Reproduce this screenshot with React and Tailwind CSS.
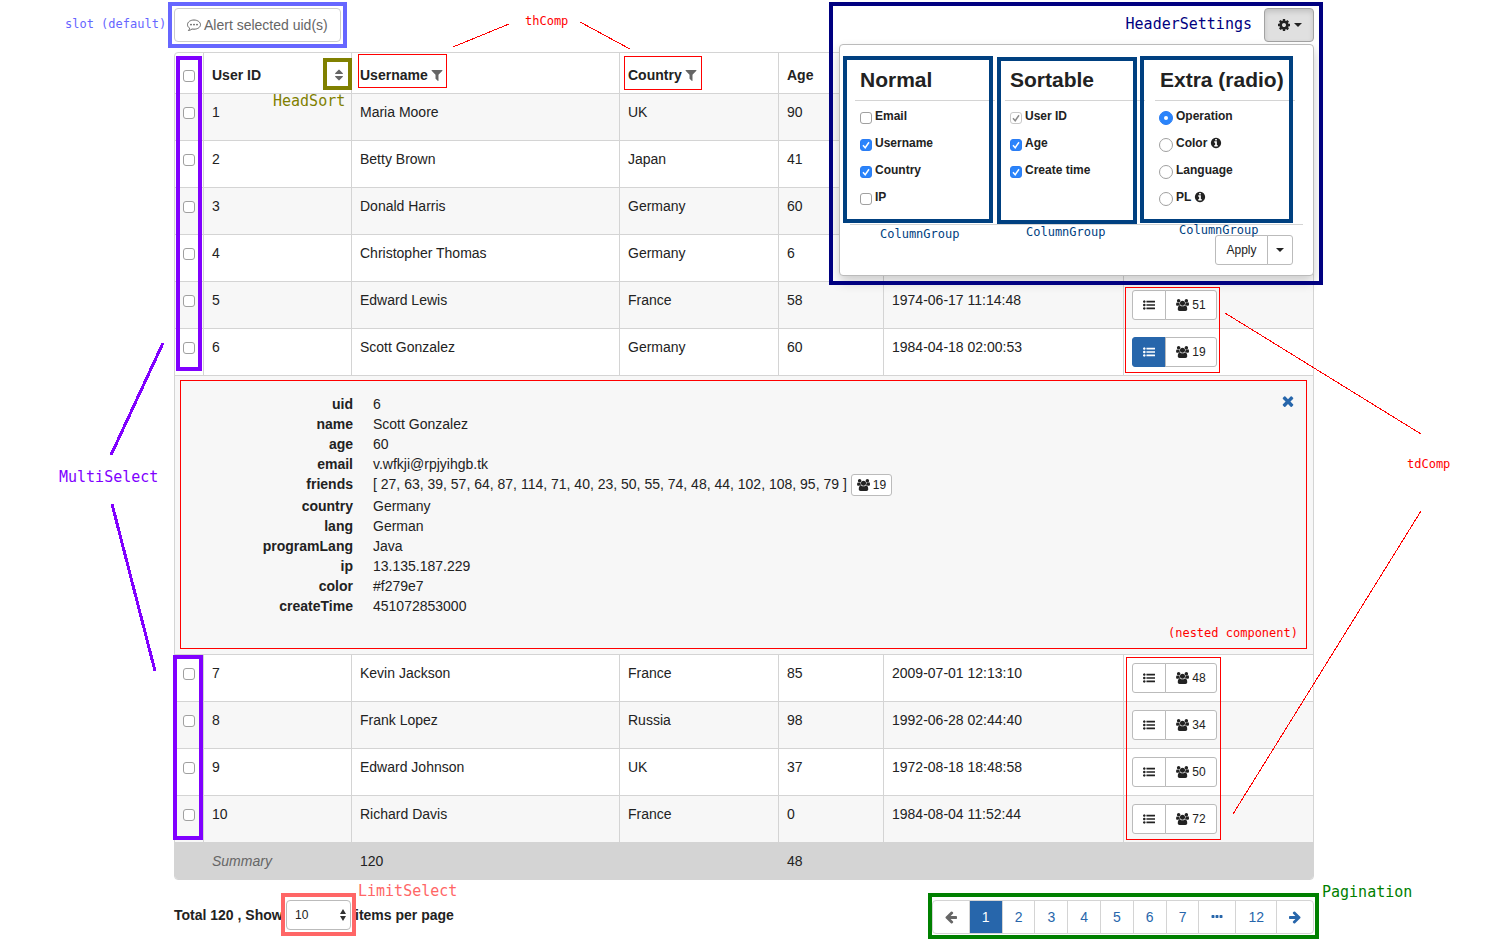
import React from 'react';

const ICONS = {
  users: [1920, 'M593 896q-162 5-265 128h-134q-82 0-138-40.5t-56-118.5q0-353 124-353 6 0 43.5 21t97.5 42.5 119 21.5q67 0 133-23-5 37-5 66 0 159 93 287zm1071 637q0 120-73 189.5t-194 69.5h-874q-121 0-194-69.5t-73-189.5q0-53 3.5-103.5t14-109 26.5-108.5 43-97.5 62-81 85.5-53.5 111.5-20q10 0 43 21.5t73 48 107 48 135 21.5 135-21.5 107-48 73-48 43-21.5q61 0 111.5 20t85.5 53.5 62 81 43 97.5 26.5 108.5 14 109 3.5 103.5zm-1024-1277q0 106-75 181t-181 75-181-75-75-181 75-181 181-75 181 75 75 181zm704 384q0 159-112.5 271.5t-271.5 112.5-271.5-112.5-112.5-271.5 112.5-271.5 271.5-112.5 271.5 112.5 112.5 271.5zm576 225q0 78-56 118.5t-138 40.5h-134q-103-123-265-128 93-128 93-287 0-29-5-66 66 23 133 23 59 0 119-21.5t97.5-42.5 43.5-21q124 0 124 353zm-128-609q0 106-75 181t-181 75-181-75-75-181 75-181 181-75 181 75 75 181z'],
  cog: [1792, 'M1152 896q0-106-75-181t-181-75-181 75-75 181 75 181 181 75 181-75 75-181zm512-109v222q0 12-8 23t-20 13l-185 28q-19 54-39 91 35 50 107 138 10 12 10 25t-9 23q-27 37-99 108t-94 71q-12 0-26-9l-138-108q-44 23-91 38-16 136-29 186-7 28-36 28h-222q-14 0-24.5-8.5t-11.5-21.5l-28-184q-49-16-90-37l-141 107q-10 9-25 9-14 0-25-11-126-114-165-168-7-10-7-23 0-12 8-23 15-21 51-66.5t54-70.5q-27-50-41-99l-183-27q-13-2-21-12.5t-8-23.5v-222q0-12 8-23t19-13l186-28q14-46 39-92-40-57-107-138-10-12-10-24 0-10 9-23 26-36 98.5-107.5t94.5-71.5q13 0 26 10l138 107q44-23 91-38 16-136 29-186 7-28 36-28h222q14 0 24.5 8.5t11.5 21.5l28 184q49 16 90 37l142-107q9-9 24-9 13 0 25 10 129 119 165 170 7 8 7 22 0 12-8 23-15 21-51 66.5t-54 70.5q26 50 41 98l183 28q13 2 21 12.5t8 23.5z'],
  filter: [1792, 'M1595 295q17 41-14 70l-493 493v742q0 42-39 59-13 5-25 5-27 0-45-19l-256-256q-19-19-19-45v-486l-493-493q-31-29-14-70 17-39 59-39h1280q42 0 59 39z'],
  times: [1792, 'M1490 1322q0 40-28 68l-136 136q-28 28-68 28t-68-28l-294-294-294 294q-28 28-68 28t-68-28l-136-136q-28-28-28-68t28-68l294-294-294-294q-28-28-28-68t28-68l136-136q28-28 68-28t68 28l294 294 294-294q28-28 68-28t68 28l136 136q28 28 28 68t-28 68l-294 294 294 294q28 28 28 68z'],
  sort: [1792, 'M1408 1088q0 26-19 45l-448 448q-19 19-45 19t-45-19l-448-448q-19-19-19-45t19-45 45-19h896q26 0 45 19t19 45zm0-384q0 26-19 45t-45 19h-896q-26 0-45-19t-19-45 19-45l448-448q19-19 45-19t45 19l448 448q19 19 19 45z'],
  list: [1792, 'M384 1408q0 80-56 136t-136 56-136-56-56-136 56-136 136-56 136 56 56 136zm0-512q0 80-56 136t-136 56-136-56-56-136 56-136 136-56 136 56 56 136zm1408 416v192q0 13-9.5 22.5t-22.5 9.5h-1216q-13 0-22.5-9.5t-9.5-22.5v-192q0-13 9.5-22.5t22.5-9.5h1216q13 0 22.5 9.5t9.5 22.5zm-1408-928q0 80-56 136t-136 56-136-56-56-136 56-136 136-56 136 56 56 136zm1408 416v192q0 13-9.5 22.5t-22.5 9.5h-1216q-13 0-22.5-9.5t-9.5-22.5v-192q0-13 9.5-22.5t22.5-9.5h1216q13 0 22.5 9.5t9.5 22.5zm0-512v192q0 13-9.5 22.5t-22.5 9.5h-1216q-13 0-22.5-9.5t-9.5-22.5v-192q0-13 9.5-22.5t22.5-9.5h1216q13 0 22.5 9.5t9.5 22.5z'],
  left: [1792, 'M1664 896v128q0 53-32.5 90.5t-84.5 37.5h-704l293 294q38 36 38 90t-38 90l-75 76q-37 37-90 37-52 0-91-37l-651-652q-37-37-37-90 0-52 37-91l651-650q38-38 91-38 52 0 90 38l75 74q38 38 38 91t-38 91l-293 293h704q52 0 84.5 37.5t32.5 90.5z'],
  ellipsis: [1792, 'M576 736v192q0 40-28 68t-68 28h-192q-40 0-68-28t-28-68v-192q0-40 28-68t68-28h192q40 0 68 28t28 68zm512 0v192q0 40-28 68t-68 28h-192q-40 0-68-28t-28-68v-192q0-40 28-68t68-28h192q40 0 68 28t28 68zm512 0v192q0 40-28 68t-68 28h-192q-40 0-68-28t-28-68v-192q0-40 28-68t68-28h192q40 0 68 28t28 68z'],
  info: [1792, 'M1152 1376v-160q0-14-9-23t-23-9h-96v-512q0-14-9-23t-23-9h-320q-14 0-23 9t-9 23v160q0 14 9 23t23 9h96v320h-96q-14 0-23 9t-9 23v160q0 14 9 23t23 9h448q14 0 23-9t9-23zm-128-896v-160q0-14-9-23t-23-9h-192q-14 0-23 9t-9 23v160q0 14 9 23t23 9h192q14 0 23-9t9-23zm640 416q0 209-103 385.5t-279.5 279.5-385.5 103-385.5-103-279.5-279.5-103-385.5 103-385.5 279.5-279.5 385.5-103 385.5 103 279.5 279.5 103 385.5z'],
};

function Icon({ name, className = 'h-3.5 w-3.5' }) {
  const [w, d] = ICONS[name];
  return (
    <svg viewBox={`0 0 ${w} 1792`} className={`shrink-0 fill-current ${className}`} aria-hidden="true">
      <path d={d} />
    </svg>
  );
}

function CommentIcon() {
  return (
    <svg viewBox="0 0 14 14" className="h-3.5 w-3.5 shrink-0" aria-hidden="true">
      <path
        d="M7 2C3.400 2 .5 4 .5 6.700c0 1.400.8 2.700 2.200 3.500-.2.900-.6 1.600-1.300 2.300 1.500-.2 2.700-.8 3.600-1.500.6.1 1.300.2 2 .2 3.600 0 6.500-2 6.500-4.500S10.600 2 7 2z"
        fill="none"
        stroke="currentColor"
        strokeWidth="1"
        strokeLinejoin="round"
      />
      <circle cx="4" cy="6.600" r="0.950" fill="currentColor" />
      <circle cx="7" cy="6.600" r="0.950" fill="currentColor" />
      <circle cx="10" cy="6.600" r="0.950" fill="currentColor" />
    </svg>
  );
}

function Caret() {
  return (
    <svg viewBox="0 0 8 4" className="h-1 w-2 shrink-0 fill-current" aria-hidden="true">
      <path d="M0 0h8L4 4z" />
    </svg>
  );
}

function Check({ label, ...props }) {
  return (
    <span className="relative block h-3 w-3 shrink-0">
      <input
        type="checkbox"
        aria-label={label}
        className="peer block h-3 w-3 appearance-none rounded-[3px] border border-[#a0a0a0] bg-white checked:border-[#2a7df4] checked:bg-[#2a84fb] disabled:border-[#c8c8c8] disabled:bg-white"
        {...props}
      />
      <svg
        viewBox="0 0 12 12"
        className="pointer-events-none absolute inset-0 hidden h-3 w-3 text-white peer-checked:block peer-disabled:text-[#8a8a8a]"
        aria-hidden="true"
      >
        <path d="M3 6.200l2.200 2.500L9 3.200" fill="none" stroke="currentColor" strokeWidth="1.500" />
      </svg>
    </span>
  );
}

function Radio(props) {
  return (
    <span className="relative -ml-px block h-3.5 w-3.5 shrink-0">
      <input
        type="radio"
        name="extra"
        className="peer block h-3.5 w-3.5 appearance-none rounded-full border border-[#a0a0a0] bg-white checked:border-[#2a7df4] checked:bg-[#2a84fb]"
        {...props}
      />
      <span className="pointer-events-none absolute inset-0 m-auto hidden h-1 w-1 rounded-full bg-white peer-checked:block" />
    </span>
  );
}

function Note({ className, children }) {
  return (
    <span className={`pointer-events-none absolute z-10 whitespace-nowrap font-['DejaVu_Sans_Mono',monospace] ${className}`}>
      {children}
    </span>
  );
}

function Frame({ className }) {
  return <span className={`pointer-events-none absolute z-10 ${className}`} />;
}

const GROUPS = [
  {
    title: 'Normal',
    frame: '-left-3 w-[150px] -top-px',
    note: 'left-[25px] top-[169px]',
    items: [['Email'], ['Username', true], ['Country', true], ['IP']],
  },
  {
    title: 'Sortable',
    frame: '-left-2 w-[140px] top-0',
    note: 'left-[21px] top-[167px]',
    items: [['User ID', true, true], ['Age', true], ['Create time', true]],
  },
  {
    title: 'Extra (radio)',
    frame: '-left-[15px] w-[153px] -top-px',
    note: 'left-6 top-[165px]',
    radio: true,
    items: [['Operation', true], ['Color', false, false, true], ['Language'], ['PL', false, false, true]],
  },
];

function HeaderSettings() {
  return (
    <div className="relative">
      <Frame className="-right-[9px] -top-1.5 h-[283px] w-[494px] border-4 border-[#000080]" />
      <Note className="right-full top-1 mr-3 text-[15px] leading-6 text-[#000080]">HeaderSettings</Note>
      <button
        type="button"
        aria-label="Header settings"
        className="flex h-[34px] w-[50px] items-center justify-center gap-[3px] rounded border border-[#a3a3a3] bg-[#e0e0e0] text-[#222] shadow-[inset_0_3px_5px_rgba(0,0,0,0.125)]"
      >
        <Icon name="cog" />
        <Caret />
      </button>
      <div className="absolute right-0 top-full z-[5] mt-0.5 h-[232px] w-[475px] rounded border border-[#bbb] bg-white px-2.5 shadow-[0_6px_12px_rgba(0,0,0,0.2)]">
        <div className="flex h-[180px] gap-2.5 border-b border-[#d4d4d4] px-[5px] pt-3">
          {GROUPS.map((g) => (
            <fieldset key={g.title} className="relative w-[140px]">
              <Frame className={`h-[167px] border-4 border-[#004080] ${g.frame}`} />
              <Note className={`text-xs text-[#004080] ${g.note}`}>ColumnGroup</Note>
              <h4 className="h-11 whitespace-nowrap border-b border-[#d4d4d4] pl-[5px] pt-[11px] text-[21px] font-bold leading-6">
                {g.title}
              </h4>
              <div className="pt-px">
                {g.items.map(([text, on, off, info]) => (
                  <label key={text} className="flex h-[27px] items-center gap-[3px] pl-[5px] text-xs font-bold">
                    <span className="pt-[5px]">
                      {g.radio ? <Radio defaultChecked={!!on} /> : <Check defaultChecked={!!on} disabled={!!off} />}
                    </span>
                    {text}
                    {info && <Icon name="info" className="h-3 w-3" />}
                  </label>
                ))}
              </div>
            </fieldset>
          ))}
        </div>
        <div className="flex justify-end pr-2.5 pt-2.5">
          <button type="button" className="h-[30px] w-[53px] rounded-l-[3px] border border-[#bbb] bg-white text-xs">
            Apply
          </button>
          <button
            type="button"
            aria-label="More apply options"
            className="-ml-px flex h-[30px] w-[26px] items-center justify-center rounded-r-[3px] border border-[#bbb] bg-white"
          >
            <Caret />
          </button>
        </div>
      </div>
    </div>
  );
}

const TOP_ROWS = [
  [1, 'Maria Moore', 'UK', 90],
  [2, 'Betty Brown', 'Japan', 41],
  [3, 'Donald Harris', 'Germany', 60],
  [4, 'Christopher Thomas', 'Germany', 6],
  [5, 'Edward Lewis', 'France', 58, '1974-06-17 11:14:48', 51],
  [6, 'Scott Gonzalez', 'Germany', 60, '1984-04-18 02:00:53', 19],
];
const BOTTOM_ROWS = [
  [7, 'Kevin Jackson', 'France', 85, '2009-07-01 12:13:10', 48],
  [8, 'Frank Lopez', 'Russia', 98, '1992-06-28 02:44:40', 34],
  [9, 'Edward Johnson', 'UK', 37, '1972-08-18 18:48:58', 50],
  [10, 'Richard Davis', 'France', 0, '1984-08-04 11:52:44', 72],
];

const CELL = 'border-b border-r border-[#d4d4d4] px-2 py-2 align-top';
const LAST = 'border-b border-[#d4d4d4] px-2 py-2 align-top';

function Row({ data, shaded, open }) {
  const [id, name, country, age, time, friends] = data;
  return (
    <tr className={`h-[47px] ${shaded ? 'bg-[#f7f7f7]' : 'bg-white'}`}>
      <td className={CELL}>
        <div className="pt-[5px]">
          <Check label={`Select user ${id}`} />
        </div>
      </td>
      <td className={CELL}>{id}</td>
      <td className={CELL}>{name}</td>
      <td className={CELL}>{country}</td>
      <td className={CELL}>{age}</td>
      <td className={CELL}>{time}</td>
      <td className={LAST}>
        {friends !== undefined && (
          <div className="flex text-xs">
            <button
              type="button"
              aria-label="Details"
              className={`flex h-[30px] w-[34px] items-center justify-center rounded-l-[3px] border ${
                open ? 'border-[#2766ab] bg-[#2766ab] text-white' : 'border-[#bbb] bg-white'
              }`}
            >
              <Icon name="list" className="h-3 w-3" />
            </button>
            <button
              type="button"
              className="-ml-px flex h-[30px] w-[52px] items-center justify-center gap-[3px] rounded-r-[3px] border border-[#bbb] bg-white"
            >
              <Icon name="users" className="h-3 w-[13px]" />
              {friends}
            </button>
          </div>
        )}
      </td>
    </tr>
  );
}

const DETAILS = [
  ['uid', '6'],
  ['name', 'Scott Gonzalez'],
  ['age', '60'],
  ['email', 'v.wfkji@rpjyihgb.tk'],
  ['friends', '[ 27, 63, 39, 57, 64, 87, 114, 71, 40, 23, 50, 55, 74, 48, 44, 102, 108, 95, 79 ]'],
  ['country', 'Germany'],
  ['lang', 'German'],
  ['programLang', 'Java'],
  ['ip', '13.135.187.229'],
  ['color', '#f279e7'],
  ['createTime', '451072853000'],
];

function NestedDetails() {
  return (
    <div className="relative border border-[#ff0000] px-3 pb-8 pt-[13px]">
      <button type="button" aria-label="Close" className="absolute right-2.5 top-3 text-[#2766ab]">
        <Icon name="times" className="h-4 w-4" />
      </button>
      <dl>
        {DETAILS.map(([k, v]) => (
          <div key={k} className="flex gap-5">
            <dt className="w-40 text-right font-bold">{k}</dt>
            <dd className="flex gap-1">
              {v}
              {k === 'friends' && (
                <button
                  type="button"
                  className="flex h-[22px] items-center gap-[3px] rounded-[3px] border border-[#bbb] bg-white px-[5px] text-xs"
                >
                  <Icon name="users" className="h-3 w-[13px]" />
                  19
                </button>
              )}
            </dd>
          </div>
        ))}
      </dl>
      <Note className="bottom-[7px] right-2 text-xs text-[#ff0000]">(nested component)</Note>
    </div>
  );
}

function Pagination() {
  const item = 'flex h-[34px] items-center border border-[#d4d4d4] px-3';
  return (
    <nav className="relative" aria-label="Pagination">
      <Frame className="-bottom-[5px] -left-1 -right-[5px] -top-[7px] border-4 border-[#008000]" />
      <Note className="-top-5 left-full ml-2 text-[15px] leading-6 text-[#008000]">Pagination</Note>
      <ul className="flex text-[#2766ab]">
        <li>
          <a href="#prev" aria-label="Previous" className={`${item} rounded-l text-[#666]`}>
            <Icon name="left" className="-mx-px h-3.5 w-3.5" />
          </a>
        </li>
        {[1, 2, 3, 4, 5, 6, 7].map((n) => (
          <li key={n} className="-ml-px">
            <a href={`#page-${n}`} className={`${item} ${n === 1 ? 'relative border-[#2766ab] bg-[#2766ab] text-white' : ''}`}>
              {n}
            </a>
          </li>
        ))}
        <li className="-ml-px">
          <a href="#more" aria-label="More pages" className={item}>
            <Icon name="ellipsis" className="-mx-px h-3.5 w-3.5" />
          </a>
        </li>
        <li className="-ml-px">
          <a href="#page-12" className={item}>12</a>
        </li>
        <li className="-ml-px">
          <a href="#next" aria-label="Next" className={`${item} rounded-r`}>
            <Icon name="left" className="-mx-px h-3.5 w-3.5 -scale-x-100" />
          </a>
        </li>
      </ul>
    </nav>
  );
}

function Annotations() {
  return (
    <>
      <Frame className="left-[176px] top-14 h-[315px] w-[26px] border-4 border-[#8000ff]" />
      <Frame className="left-[173px] top-[655px] h-[185px] w-[30px] border-4 border-[#8000ff]" />
      <Frame className="left-[323px] top-[58px] h-8 w-[29px] border-4 border-[#808000]" />
      <Frame className="left-[358px] top-[54px] h-[34px] w-[89px] border border-[#ff0000]" />
      <Frame className="left-[624px] top-[56px] h-[34px] w-[78px] border border-[#ff0000]" />
      <Frame className="left-[1125px] top-[287px] h-[86px] w-[95px] border border-[#ff0000]" />
      <Frame className="left-[1126px] top-[657px] h-[183px] w-[95px] border border-[#ff0000]" />
      <Note className="left-[65px] top-4 text-xs text-[#6666ff]">slot (default)</Note>
      <Note className="left-[525px] top-[13px] text-xs text-[#ff0000]">thComp</Note>
      <Note className="left-[273px] top-[89px] text-[15px] leading-6 text-[#808000]">HeadSort</Note>
      <Note className="left-[59px] top-[465px] text-[15px] leading-6 text-[#8000ff]">MultiSelect</Note>
      <Note className="left-[1407px] top-[456px] text-xs text-[#ff0000]">tdComp</Note>
      <svg
        className="pointer-events-none absolute left-0 top-0 z-10 h-px w-px overflow-visible"
        shapeRendering="crispEdges"
        aria-hidden="true"
      >
        <g stroke="#ff0000" strokeWidth="1">
          <path d="M453 47L509 24" />
          <path d="M580 22L630 49" />
          <path d="M1225 313L1421 434" />
          <path d="M1421 511L1233 814" />
        </g>
        <g stroke="#8000ff" strokeWidth="3">
          <path d="M163 343L111 455" />
          <path d="M112 504L155 671" />
        </g>
      </svg>
    </>
  );
}

export default function App() {
  return (
    <div className="relative bg-white pl-[174px] pr-[190px] pt-2 font-['Liberation_Sans',Arial,sans-serif] text-sm leading-5 text-[#222]">
      <Annotations />
      <header className="flex justify-between pb-2.5">
        <div className="relative">
          <Frame className="-inset-1.5 border-4 border-[#6666ff]" />
          <button
            type="button"
            className="flex h-[34px] items-center gap-[3px] rounded border border-[#ccc] bg-white px-3 text-[#666]"
          >
            <CommentIcon />
            Alert selected uid(s)
          </button>
        </div>
        <HeaderSettings />
      </header>

      <main className="overflow-hidden rounded border border-[#d4d4d4]">
        <table className="w-full table-fixed border-separate border-spacing-0 text-left">
          <colgroup>
            <col className="w-[29px]" />
            <col className="w-[148px]" />
            <col className="w-[268px]" />
            <col className="w-[159px]" />
            <col className="w-[105px]" />
            <col className="w-[240px]" />
            <col />
          </colgroup>
          <thead>
            <tr className="[&>th]:border-b [&>th]:border-r [&>th]:border-[#d4d4d4] [&>th]:px-2 [&>th]:pb-2 [&>th]:pt-3 [&>th:last-child]:border-r-0">
              <th>
                <div className="flex h-5 items-end pb-[3px]">
                  <Check label="Select all users" />
                </div>
              </th>
              <th>
                <div className="flex items-center justify-between">
                  User ID
                  <button type="button" aria-label="Sort by User ID" className="-mr-[3px] text-[#666]">
                    <Icon name="sort" />
                  </button>
                </div>
              </th>
              <th>
                <div className="flex items-center gap-0.5">
                  Username
                  <Icon name="filter" className="h-4 w-3.5 text-[#666]" />
                </div>
              </th>
              <th>
                <div className="flex items-center gap-0.5">
                  Country
                  <Icon name="filter" className="h-4 w-3.5 text-[#666]" />
                </div>
              </th>
              <th>Age</th>
              <th aria-label="Create time" />
              <th aria-label="Operation" />
            </tr>
          </thead>
          <tbody>
            {TOP_ROWS.map((r, i) => (
              <Row key={r[0]} data={r} shaded={i % 2 === 0} open={r[0] === 6} />
            ))}
            <tr className="bg-[#f7f7f7]">
              <td colSpan={7} className="border-b border-[#d4d4d4] pb-[5px] pl-[5px] pr-1.5 pt-1">
                <NestedDetails />
              </td>
            </tr>
            {BOTTOM_ROWS.map((r, i) => (
              <Row key={r[0]} data={r} shaded={i % 2 === 1} />
            ))}
          </tbody>
          <tfoot>
            <tr className="bg-[#d4d4d4] [&>td]:p-2">
              <td />
              <td className="italic text-[#666]">Summary</td>
              <td>120</td>
              <td />
              <td>48</td>
              <td />
              <td />
            </tr>
          </tfoot>
        </table>
      </main>

      <footer className="flex items-start justify-between pb-1.5 pt-5">
        <div className="flex h-[30px] items-center font-bold">
          <label htmlFor="limit" className="w-[112px] whitespace-nowrap">Total 120 , Show</label>
          <div className="relative mr-1">
            <Frame className="-inset-x-[5px] -bottom-1.5 -top-[7px] border-4 border-[#ff6666]" />
            <Note className="-top-[21px] left-full ml-[7px] text-[15px] font-normal leading-6 text-[#ff6666]">LimitSelect</Note>
            <select
              id="limit"
              className="block h-[30px] w-[65px] appearance-none rounded border border-[#bbb] bg-white pl-2 text-xs font-normal"
            >
              <option>10</option>
            </select>
            <svg viewBox="0 0 6 12" className="pointer-events-none absolute right-[5px] top-[9px] h-3 w-1.5 fill-[#333]" aria-hidden="true">
              <path d="M0 5l3-5 3 5zM0 7h6l-3 5z" />
            </svg>
          </div>
          items per page
        </div>
        <Pagination />
      </footer>
    </div>
  );
}
